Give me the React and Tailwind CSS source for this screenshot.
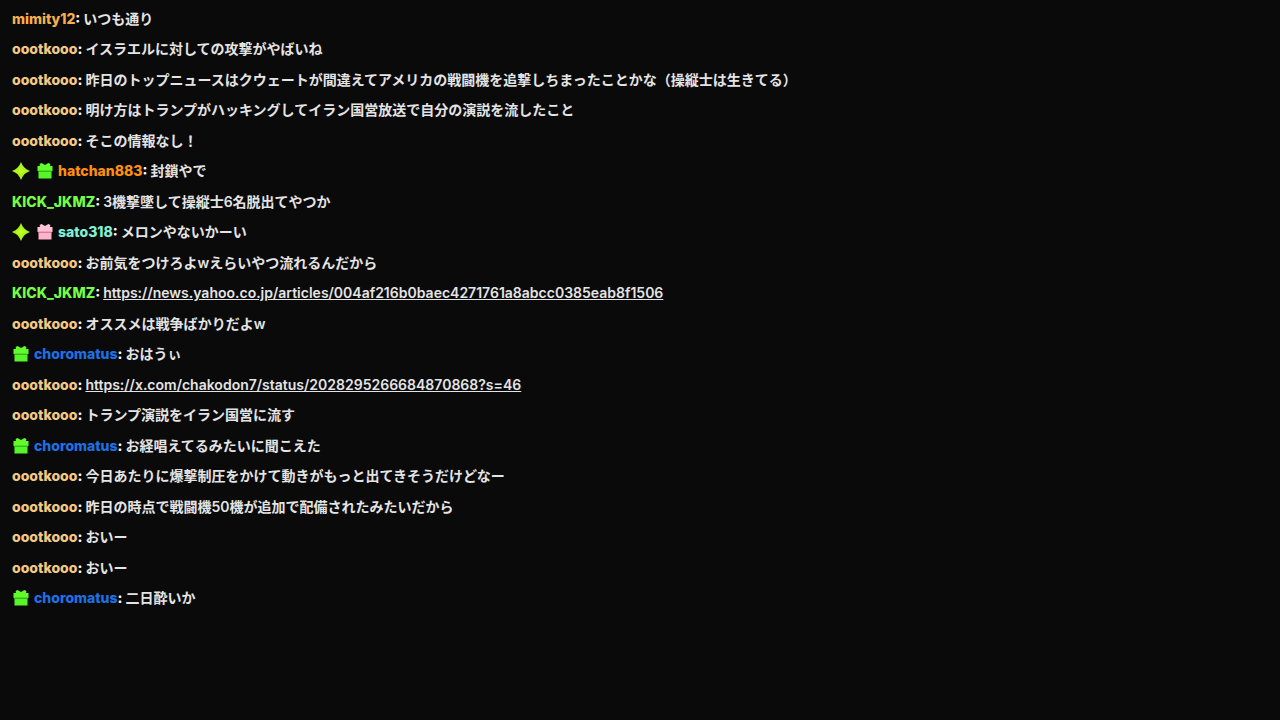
import React from 'react'

const messages = [
  { user: 'mimity12', color: 'text-[#f5b04e]', text: 'いつも通り' },
  { user: 'oootkooo', color: 'text-[#f3c983]', text: 'イスラエルに対しての攻撃がやばいね' },
  { user: 'oootkooo', color: 'text-[#f3c983]', text: '昨日のトップニュースはクウェートが間違えてアメリカの戦闘機を追撃しちまったことかな（操縦士は生きてる）' },
  { user: 'oootkooo', color: 'text-[#f3c983]', text: '明け方はトランプがハッキングしてイラン国営放送で自分の演説を流したこと' },
  { user: 'oootkooo', color: 'text-[#f3c983]', text: 'そこの情報なし！' },
  { user: 'hatchan883', color: 'text-[#ff8f0f]', spark: true, gift: 'green', text: '封鎖やで' },
  { user: 'KICK_JKMZ', color: 'text-[#75fd46]', text: '3機撃墜して操縦士6名脱出てやつか' },
  { user: 'sato318', color: 'text-[#83efd5]', spark: true, gift: 'pink', text: 'メロンやないかーい' },
  { user: 'oootkooo', color: 'text-[#f3c983]', text: 'お前気をつけろよwえらいやつ流れるんだから' },
  { user: 'KICK_JKMZ', color: 'text-[#75fd46]', link: 'https://news.yahoo.co.jp/articles/004af216b0baec4271761a8abcc0385eab8f1506' },
  { user: 'oootkooo', color: 'text-[#f3c983]', text: 'オススメは戦争ばかりだよw' },
  { user: 'choromatus', color: 'text-[#1f6fe5]', gift: 'green', text: 'おはうぃ' },
  { user: 'oootkooo', color: 'text-[#f3c983]', link: 'https://x.com/chakodon7/status/2028295266684870868?s=46' },
  { user: 'oootkooo', color: 'text-[#f3c983]', text: 'トランプ演説をイラン国営に流す' },
  { user: 'choromatus', color: 'text-[#1f6fe5]', gift: 'green', text: 'お経唱えてるみたいに聞こえた' },
  { user: 'oootkooo', color: 'text-[#f3c983]', text: '今日あたりに爆撃制圧をかけて動きがもっと出てきそうだけどなー' },
  { user: 'oootkooo', color: 'text-[#f3c983]', text: '昨日の時点で戦闘機50機が追加で配備されたみたいだから' },
  { user: 'oootkooo', color: 'text-[#f3c983]', text: 'おいー' },
  { user: 'oootkooo', color: 'text-[#f3c983]', text: 'おいー' },
  { user: 'choromatus', color: 'text-[#1f6fe5]', gift: 'green', text: '二日酔いか' },
]

const giftColors = {
  green: { lid: '#62fb2c', box: '#55f52a', ribbon: '#2fae1c' },
  pink: { lid: '#ffc3d6', box: '#fdb4cb', ribbon: '#d96a8e' },
}

function SparkBadge() {
  return (
    <svg viewBox="0 0 18 18" className="size-[18px] shrink-0" aria-hidden="true">
      <path d="M9 0 C10.6 4.6 13.4 7.4 18 9 C13.4 10.6 10.6 13.4 9 18 C7.4 13.4 4.6 10.6 0 9 C4.6 7.4 7.4 4.6 9 0 Z" fill="#a6f51c" />
      <path d="M9 4 C9.6 6.8 11.2 8.4 14 9 C11.2 9.6 9.6 11.2 9 14 C8.4 11.2 6.8 9.6 4 9 C6.8 8.4 8.4 6.8 9 4 Z" fill="#c4ff1f" />
    </svg>
  )
}

function GiftBadge({ tone }) {
  const c = giftColors[tone]
  return (
    <svg viewBox="0 0 18 18" className="size-[18px] shrink-0" aria-hidden="true">
      <path d="M1.5 4 H4 L3.6 2 L5.6 1 L9 3 L12.4 1 L14.4 2 L14 4 H16.5 V9 H1.5 Z" fill={c.lid} />
      <path d="M2.5 9 H15.5 V16.5 H2.5 Z" fill={c.box} />
      <path d="M2.5 8.6 H15.5 V9.8 H2.5 Z" fill={c.ribbon} />
    </svg>
  )
}

function Message({ user, color, spark, gift, text, link }) {
  return (
    <li className="flex items-start py-1 even:pb-[5px]">
      {(spark || gift) && (
        <span className="mr-1 flex h-[22px] shrink-0 items-center gap-[6px]">
          {spark && <SparkBadge />}
          {gift && <GiftBadge tone={gift} />}
        </span>
      )}
      <p className="min-w-0 break-words">
        <span className={`font-extrabold ${color}`}>{user}</span>
        <span className="font-extrabold text-white">: </span>
        {link ? <a href={link} className="underline">{link}</a> : text}
      </p>
    </li>
  )
}

export default function App() {
  return (
    <main className="min-h-screen bg-[#0a0a0a] px-3 py-1 font-['Inter','Noto_Sans_CJK_JP',sans-serif] text-[14px] leading-[22px] font-semibold text-[#e4e4e4]">
      <ul>
        {messages.map((message, i) => (
          <Message key={i} {...message} />
        ))}
      </ul>
    </main>
  )
}
